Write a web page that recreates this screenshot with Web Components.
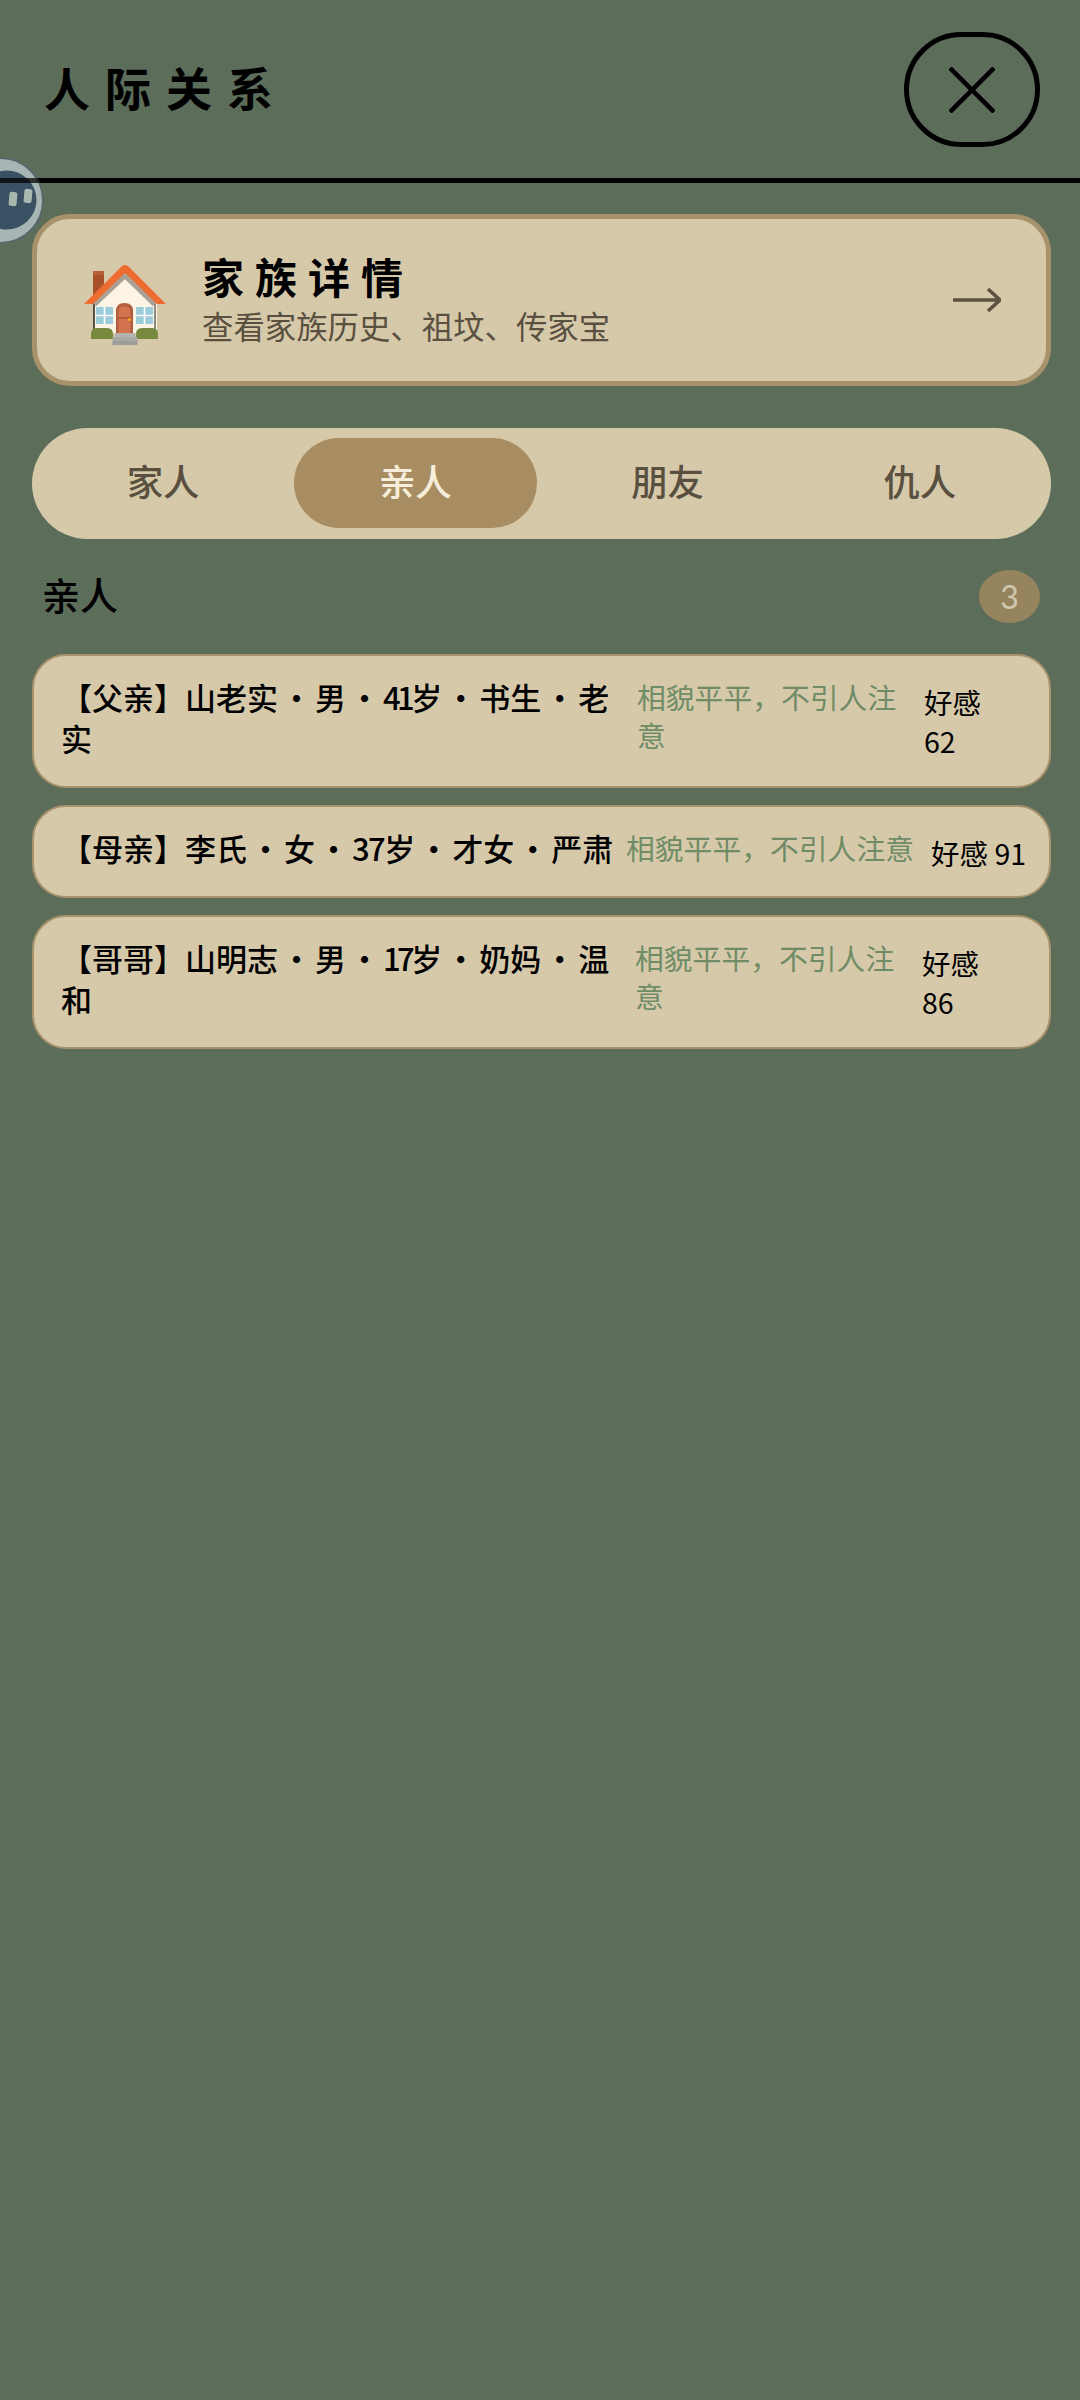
<!DOCTYPE html>
<html lang="zh-CN">
<head>
<meta charset="utf-8">
<title>人际关系</title>
<style>
  html, body { margin: 0; padding: 0; background: #5c6d5a; }
  body { width: 1080px; min-height: 2400px; font-family: "Noto Sans CJK SC", "Noto Sans", sans-serif; color: #000; position: relative; overflow: hidden; }
</style>
</head>
<body>
<float-ball></float-ball>
<page-header>人际关系</page-header>
<page-main>
  <family-card heading="家族详情" sub="查看家族历史、祖坟、传家宝"></family-card>
  <tab-bar>
    <tab-item>家人</tab-item>
    <tab-item active>亲人</tab-item>
    <tab-item>朋友</tab-item>
    <tab-item>仇人</tab-item>
  </tab-bar>
  <section-head count="3">亲人</section-head>
  <person-list>
    <person-row cols="560px 271px 80px" desc="相貌平平，不引人注意" score="好感 62">【父亲】山老实 · 男 · <span class="one">41</span>岁 · 书生 · 老<br>实</person-row>
    <person-row nowrap cols="549px 289px 96px" desc="相貌平平，不引人注意" score="好感 91">【母亲】李氏 · 女 · <span class="two">37</span>岁 · 才女 · 严肃</person-row>
    <person-row cols="558px 271px 80px" desc="相貌平平，不引人注意" score="好感 86">【哥哥】山明志 · 男 · <span class="one">17</span>岁 · 奶妈 · 温<br>和</person-row>
  </person-list>
</page-main>

<script>
function def(name, html, init) {
  customElements.define(name, class extends HTMLElement {
    constructor() {
      super();
      this.attachShadow({ mode: 'open' }).innerHTML = html;
    }
    connectedCallback() { if (init) init(this, this.shadowRoot); }
  });
}

def('page-header', `
<style>
  :host { display: flex; align-items: center; justify-content: space-between; box-sizing: border-box; height: 183px; padding: 0 40px 0 44px; border-bottom: 5px solid #000; }
  .t { font-size: 46px; font-weight: 700; letter-spacing: 15px; line-height: 60px; margin-top: -6px; }
  .c { box-sizing: border-box; width: 136px; height: 115px; border: 5px solid #000; border-radius: 57.5px; display: flex; align-items: center; justify-content: center; margin-top: 1px; }
  svg { display: block; }
</style>
<div class="t"><slot></slot></div>
<div class="c"><svg width="46" height="46" viewBox="0 0 46 46"><path d="M1 1 L45 45 M45 1 L1 45" fill="none" stroke="#000" stroke-width="4.5"/></svg></div>`);

def('float-ball', `
<style>
  :host { position: absolute; left: -43px; top: 157px; width: 87px; height: 87px; z-index: 5; }
  svg { display: block; }
</style>
<svg width="87" height="87" viewBox="0 0 87 87">
  <defs><clipPath id="ball"><circle cx="43.5" cy="43.5" r="43.5"/></clipPath></defs>
  <circle cx="43.5" cy="43.5" r="42.5" fill="#a7b6b4" stroke="#566a69" stroke-width="2"/>
  <circle cx="50" cy="43" r="29.5" fill="#3a5163"/>
  <rect x="52" y="35" width="8" height="14" rx="2" fill="#a9b8ae" transform="rotate(5 56 42)"/>
  <rect x="67" y="32" width="8" height="14" rx="2" fill="#a9b8ae" transform="rotate(5 71 39)"/>
  <rect x="0" y="21" width="87" height="5" fill="#000" fill-opacity=".72" clip-path="url(#ball)"/>
</svg>`);

def('page-main', `
<style>
  :host { display: block; padding: 31px 29px 0 32px; }
</style>
<slot></slot>`);

def('house-icon', `
<style>
  :host { display: block; width: 84px; height: 84px; flex: none; margin-top: 10px; }
  svg { display: block; }
</style>
<svg width="84" height="84" viewBox="0 0 84 84">
  <rect x="10" y="8" width="11" height="24" fill="#a8502a"/>
  <rect x="10" y="8" width="11" height="4" fill="#b95f36"/>
  <path d="M10 38 L42 10 L74 38 V70 H10 Z" fill="#fdf4e6"/>
  <rect x="10" y="38" width="2" height="30" fill="#55504a"/>
  <rect x="71" y="38" width="2" height="30" fill="#8f8a80"/>
  <path d="M11 41 L42 12 L72 41" fill="none" stroke="#a9a096" stroke-width="6"/>
  <path d="M1 41 L38 4 Q42 0 46 4 L83 41 H74 L42 10 L10 41 Z" fill="#ef6c31"/>
  <rect x="13" y="44" width="17" height="17" fill="#9ccbd9"/>
  <path d="M21.5 44 V61 M13 52.5 H30" stroke="#fff" stroke-width="1.6"/>
  <rect x="53" y="44" width="17" height="17" fill="#9ccbd9"/>
  <path d="M61.5 44 V61 M53 52.5 H70" stroke="#fff" stroke-width="1.6"/>
  <path d="M33 70 V48 Q33 40 41.5 40 Q50 40 50 48 V70 Z" fill="#b25d3e"/>
  <path d="M35.5 70 V49 Q35.5 43 41.5 43 Q47.5 43 47.5 49 V70 Z" fill="#d2724f"/>
  <path d="M35.5 55 H47.5" stroke="#a8502f" stroke-width="1.4"/>
  <circle cx="46.5" cy="56.5" r="1.6" fill="#f6a623"/>
  <path d="M8 76 V71 Q8 65 14 65 H24 Q30 65 30 71 V76 Z" fill="#76893f"/>
  <path d="M53 76 V71 Q53 65 59 65 H69 Q75 65 75 71 V76 Z" fill="#76893f"/>
  <rect x="32" y="70" width="20" height="4" fill="#b3b3b0"/>
  <rect x="29.5" y="74" width="25" height="4" fill="#a8a8a5"/>
  <rect x="29.5" y="78" width="25" height="4" fill="#9c9c9a"/>
</svg>`);

def('family-card', `
<style>
  :host { display: flex; align-items: center; box-sizing: border-box; height: 172px; background: #d6c9aa; border: 5px solid #a8926b; border-radius: 38px; padding: 0 45px 0 46px; }
  .txt { flex: 1; margin-left: 35px; min-width: 0; }
  .h { font-size: 42px; font-weight: 700; letter-spacing: 11px; line-height: 50px; margin-top: -2px; }
  .s { font-size: 31.4px; line-height: 44px; color: #5a5040; margin-top: 3px; }
  svg { display: block; flex: none; }
</style>
<house-icon></house-icon>
<div class="txt"><div class="h"></div><div class="s"></div></div>
<svg width="48" height="24" viewBox="0 0 48 24"><path d="M0 12 H47 M35 1 L47 12 L35 23" fill="none" stroke="#5c5240" stroke-width="3.6"/></svg>`,
(el, r) => {
  r.querySelector('.h').textContent = el.getAttribute('heading');
  r.querySelector('.s').textContent = el.getAttribute('sub');
});

def('tab-bar', `
<style>
  :host { display: grid; grid-template-columns: repeat(4, 1fr); gap: 10px; box-sizing: border-box; height: 111px; margin-top: 42px; padding: 10px 10px 11px; background: #d6c9aa; border-radius: 56px; }
</style>
<slot></slot>`);

def('tab-item', `
<style>
  :host { display: flex; align-items: center; justify-content: center; box-sizing: border-box; padding-bottom: 5px; border-radius: 45px; font-size: 36.5px; font-weight: 500; color: #5a5040; }
  :host([active]) { background: #a98d62; color: #f6eedb; }
</style>
<slot></slot>`);

def('section-head', `
<style>
  :host { display: flex; align-items: center; justify-content: space-between; height: 53px; margin-top: 31px; padding: 0 11px 0 10px; font-size: 38px; font-weight: 500; color: #000; }
  .l { padding-bottom: 6px; }
  .b { width: 61px; height: 53px; border-radius: 50%; background: #96845f; color: #cfc8ae; font-size: 32px; font-weight: 400; display: flex; align-items: center; justify-content: center; font-family: Lato, "Noto Sans CJK SC", sans-serif; }
</style>
<div class="l"><slot></slot></div><div class="b"></div>`,
(el, r) => { r.querySelector('.b').textContent = el.getAttribute('count'); });

def('person-list', `
<style>
  :host { display: flex; flex-direction: column; gap: 17px; margin-top: 31px; }
</style>
<slot></slot>`);

def('person-row', `
<style>
  :host { display: grid; column-gap: 16px; align-items: start; box-sizing: border-box; background: #d6c9aa; border: 2px solid #a8926b; border-radius: 34px; padding: 24px 27px; }
  .n { font-size: 31px; font-weight: 500; line-height: 41px; color: #000; word-spacing: -4px; margin: -4px 0 4px; }
  :host([nowrap]) .n { white-space: nowrap; }
  ::slotted(.one) { letter-spacing: -3.5px; }
  ::slotted(.two) { letter-spacing: -1.5px; }
  .d { font-size: 28.8px; line-height: 38px; color: #6f8c66; margin-top: -2px; }
  .s { font-size: 28.5px; line-height: 39px; color: #000; margin-top: 2px; }
</style>
<div class="n"><slot></slot></div><div class="d"></div><div class="s"></div>`,
(el, r) => {
  el.style.gridTemplateColumns = el.getAttribute('cols');
  r.querySelector('.d').textContent = el.getAttribute('desc');
  r.querySelector('.s').textContent = el.getAttribute('score');
});
</script>
</body>
</html>
